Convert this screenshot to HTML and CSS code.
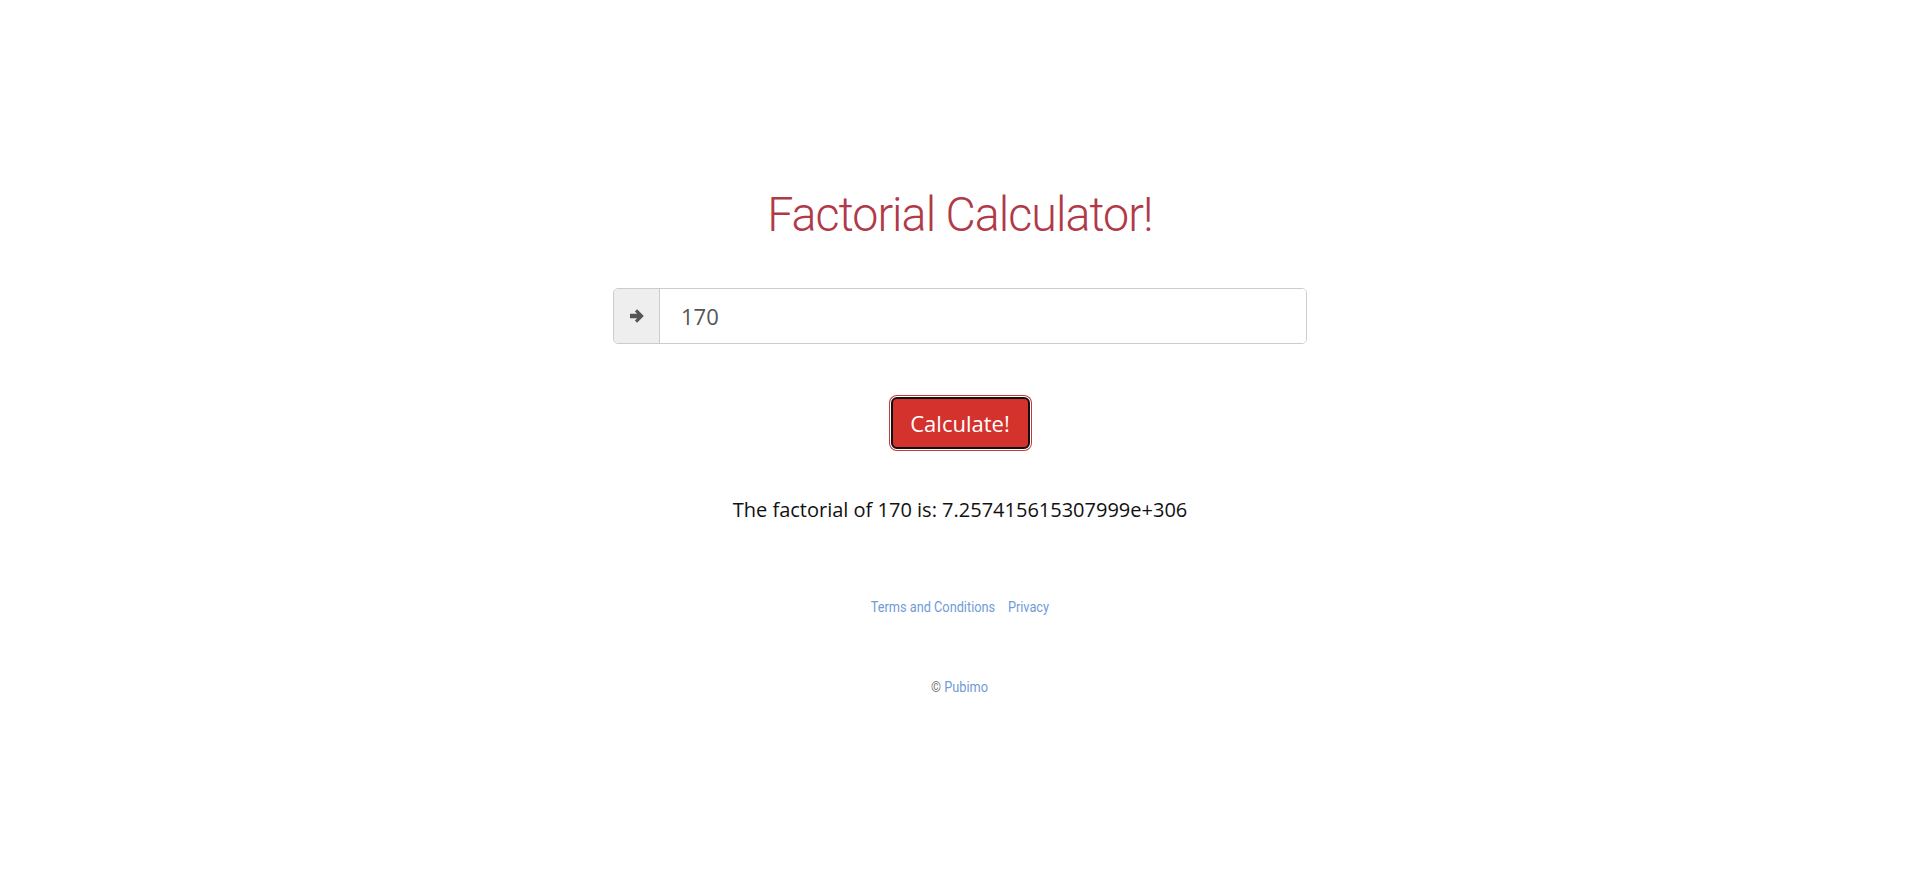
FILE: index.html
```html
<!DOCTYPE html>
<html lang="en">
<head>
<meta charset="utf-8">
<title>Factorial Calculator!</title>
<link rel="stylesheet" href="styles.css">
</head>
<body>
<main class="page">
  <h1 class="title">Factorial Calculator!</h1>
  <div class="input-group">
    <span class="addon">
      <svg class="arrow" viewBox="0 0 16 16" width="16" height="16" aria-hidden="true">
        <path d="M1 5.8h7.2L5.9 3.5 8.1 1.3 14.8 8l-6.7 6.7-2.2-2.2 2.3-2.3H1z" fill="#555"/>
      </svg>
    </span>
    <input class="field" type="text" value="170">
  </div>
  <div class="actions">
    <button class="btn" type="button">Calculate!</button>
  </div>
  <p class="result">The factorial of 170 is: 7.257415615307999e+306</p>
  <nav class="links">
    <a href="#">Terms and Conditions</a>
    <a href="#">Privacy</a>
  </nav>
  <p class="copy">&copy; <a href="#">Pubimo</a></p>
</main>
</body>
</html>
```

FILE: styles.css
```css
html, body {
  margin: 0;
  padding: 0;
  background: #fff;
}

.page {
  display: flex;
  flex-direction: column;
  align-items: center;
  padding-top: 185px;
  font-family: "Open Sans", "Liberation Sans", sans-serif;
}

.title {
  margin: 0;
  font-family: Roboto, "Liberation Sans", sans-serif;
  font-weight: 300;
  font-size: 49px;
  line-height: 60px;
  color: #b03a48;
  letter-spacing: -1px;
  transform: scaleX(0.95);
}

.input-group {
  margin-top: 43px;
  display: flex;
  width: 694px;
  height: 56px;
  box-sizing: border-box;
  border: 1px solid #ccc;
  border-radius: 5px;
  overflow: hidden;
}

.addon {
  width: 45px;
  flex: none;
  display: flex;
  align-items: center;
  justify-content: center;
  background: #eee;
  border-right: 1px solid #ccc;
}

.field {
  flex: 1;
  border: 0;
  outline: none;
  padding: 0 0 0 21px;
  font-family: "Open Sans", "Liberation Sans", sans-serif;
  font-size: 22px;
  color: #555;
  background: #fff;
}

.actions {
  margin-top: 51px;
  padding: 2px;
}

.btn {
  display: block;
  width: 139px;
  height: 52px;
  box-sizing: border-box;
  border: 2px solid #111;
  border-radius: 6px;
  background: #d3322d;
  color: #fff;
  font-family: "Open Sans", "Liberation Sans", sans-serif;
  font-size: 22px;
  padding: 0;
  box-shadow: 0 0 0 1px #fff, 0 0 0 2px #c23a3e;
}

.result {
  margin: 45px 0 0;
  font-size: 20px;
  line-height: 28px;
  color: #111;
}

.links {
  margin-top: 73px;
  display: flex;
  gap: 15px;
  font-family: Roboto, "Liberation Sans", sans-serif;
  font-size: 15px;
  line-height: 20px;
  transform: scaleX(0.85);
}

.links a, .copy a {
  color: #6f9bd6;
  text-decoration: none;
}

.copy {
  margin: 60px 0 0;
  font-family: Roboto, "Liberation Sans", sans-serif;
  font-size: 15px;
  line-height: 20px;
  color: #777;
  transform: scaleX(0.85);
}
```
